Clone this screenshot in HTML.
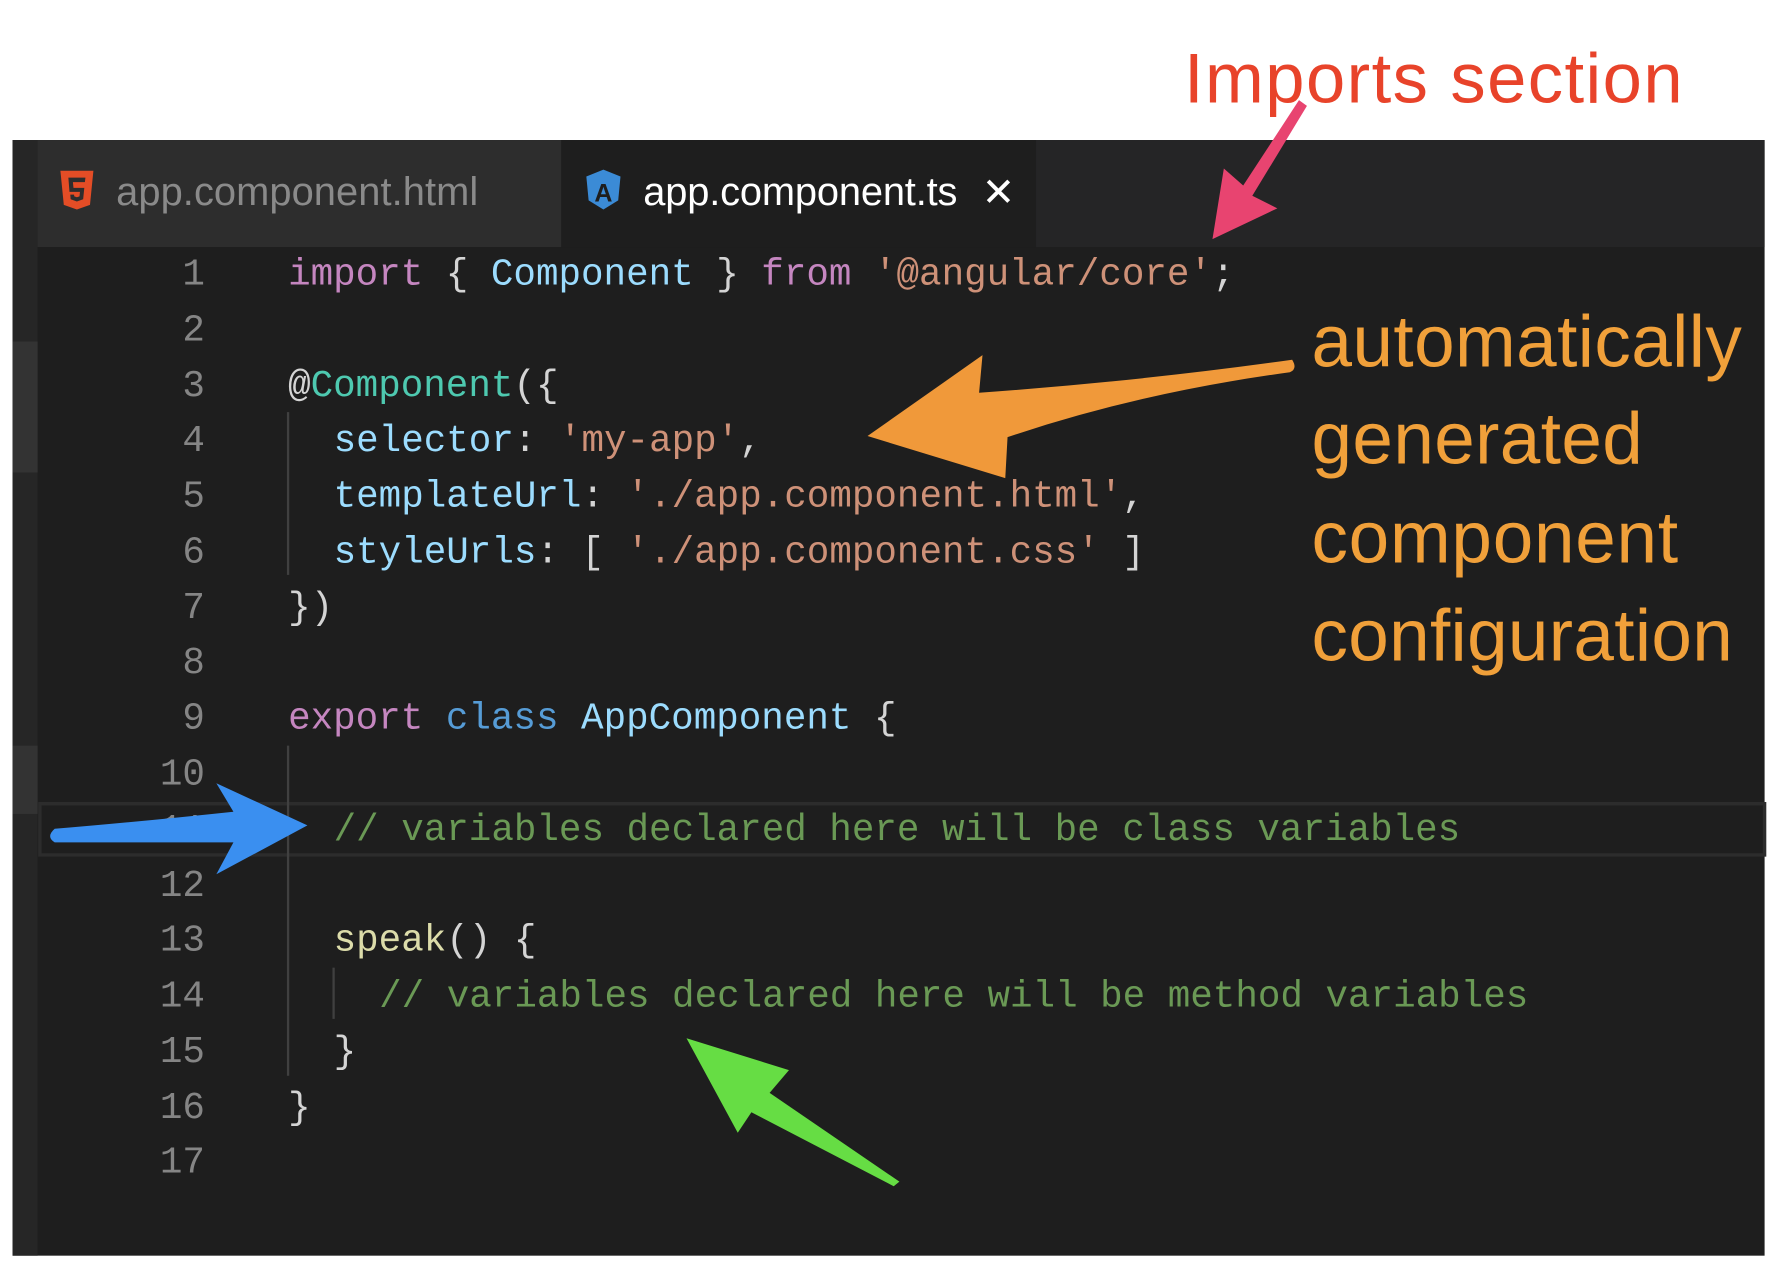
<!DOCTYPE html>
<html><head><meta charset="utf-8"><style>
html,body{margin:0;padding:0;background:#fff;width:1784px;height:1288px;overflow:hidden}
svg{display:block}
.m{font-family:"Liberation Mono",monospace;font-size:33px}
.s{font-family:"Liberation Sans",sans-serif}
</style></head><body>
<svg width="1784" height="1288" viewBox="0 0 1567 1131.4" xmlns="http://www.w3.org/2000/svg">
<rect x="0" y="0" width="1567" height="1132" fill="#fff"/>
<rect x="11" y="123" width="1539" height="980" fill="#1e1e1e"/>
<rect x="11" y="123" width="1539" height="94" fill="#252526"/>
<rect x="11" y="123" width="22" height="980" fill="#262626"/>
<rect x="11" y="300" width="22" height="115" fill="#333"/>
<rect x="11" y="655" width="22" height="60" fill="#333"/>
<rect x="33" y="123" width="460" height="94" fill="#2d2d2d"/>
<rect x="493" y="123" width="417" height="94" fill="#1e1e1e"/>
<rect x="35" y="706" width="1515" height="45" fill="#1e1e1e" stroke="#2c2c2c" stroke-width="3"/>
<path d="M53 150 L82 150 L79 180 L67.5 184 L56 180 Z" fill="#e44d26"/>
<path d="M60 156 L75 156 L74.5 160 L64 160 L64.5 165 L74 165 L73 175 L67.5 177 L62 175 L61.7 171 L65 171 L65.2 172.5 L67.5 173.3 L69.8 172.5 L70.2 168.5 L61 168.5 Z" fill="#2d2d2d"/>
<text x="102" y="180" class="s" font-size="35" fill="#8a8a8a" textLength="318">app.component.html</text>
<path d="M530 149 L545 155 L543 176 L530 184 L517 176 L515 155 Z" fill="#3b8bd6"/>
<text x="530" y="177" class="s" font-size="22" fill="#1e1e1e" text-anchor="middle" font-weight="bold">A</text>
<text x="565" y="180" class="s" font-size="35" fill="#fff" textLength="276">app.component.ts</text>
<path d="M868 159 L886 177 M886 159 L868 177" stroke="#fff" stroke-width="3.5"/>
<line x1="253" y1="362" x2="253" y2="505" stroke="#404040" stroke-width="2"/>
<line x1="253" y1="655" x2="253" y2="945" stroke="#404040" stroke-width="2"/>
<line x1="293" y1="850" x2="293" y2="895" stroke="#404040" stroke-width="2"/>
<g class="m" fill="#858585" text-anchor="end">
<text x="180" y="250">1</text><text x="180" y="299">2</text><text x="180" y="348">3</text>
<text x="180" y="396">4</text><text x="180" y="445">5</text><text x="180" y="494">6</text>
<text x="180" y="543">7</text><text x="180" y="591">8</text><text x="180" y="640">9</text>
<text x="180" y="689">10</text><text x="180" y="738">11</text><text x="180" y="787">12</text>
<text x="180" y="835">13</text><text x="180" y="884">14</text><text x="180" y="933">15</text>
<text x="180" y="982">16</text><text x="180" y="1030">17</text>
</g>
<g class="m" xml:space="preserve">
<text x="253" y="250"><tspan fill="#c586c0">import</tspan><tspan fill="#d4d4d4"> { </tspan><tspan fill="#9cdcfe">Component</tspan><tspan fill="#d4d4d4"> } </tspan><tspan fill="#c586c0">from</tspan><tspan fill="#d4d4d4"> </tspan><tspan fill="#ce9178">'@angular/core'</tspan><tspan fill="#d4d4d4">;</tspan></text>
<text x="253" y="348"><tspan fill="#d4d4d4">@</tspan><tspan fill="#4ec9b0">Component</tspan><tspan fill="#d4d4d4">({</tspan></text>
<text x="293" y="396"><tspan fill="#9cdcfe">selector</tspan><tspan fill="#d4d4d4">: </tspan><tspan fill="#ce9178">'my-app'</tspan><tspan fill="#d4d4d4">,</tspan></text>
<text x="293" y="445"><tspan fill="#9cdcfe">templateUrl</tspan><tspan fill="#d4d4d4">: </tspan><tspan fill="#ce9178">'./app.component.html'</tspan><tspan fill="#d4d4d4">,</tspan></text>
<text x="293" y="494"><tspan fill="#9cdcfe">styleUrls</tspan><tspan fill="#d4d4d4">: [ </tspan><tspan fill="#ce9178">'./app.component.css'</tspan><tspan fill="#d4d4d4"> ]</tspan></text>
<text x="253" y="543" fill="#d4d4d4">})</text>
<text x="253" y="640"><tspan fill="#c586c0">export</tspan><tspan fill="#d4d4d4"> </tspan><tspan fill="#569cd6">class</tspan><tspan fill="#d4d4d4"> </tspan><tspan fill="#9cdcfe">AppComponent</tspan><tspan fill="#d4d4d4">  {</tspan></text>
<text x="293" y="738" fill="#6a9955">// variables declared here will be class variables</text>
<text x="293" y="835"><tspan fill="#dcdcaa">speak</tspan><tspan fill="#d4d4d4">() {</tspan></text>
<text x="333" y="884" fill="#6a9955">// variables declared here will be method variables</text>
<text x="293" y="933" fill="#d4d4d4">}</text>
<text x="253" y="982" fill="#d4d4d4">}</text>
</g>
<text x="1040" y="90" class="s" font-size="62" fill="#e8432a" textLength="438">Imports section</text>
<g class="s" font-size="64" fill="#f0a03a">
<text x="1152" y="322" textLength="378">automatically</text>
<text x="1152" y="407" textLength="291">generated</text>
<text x="1152" y="494" textLength="322">component</text>
<text x="1152" y="580" textLength="370">configuration</text>
</g>
<path d="M1141 88 L1148 93 L1100 172 L1122 183 L1065 210 L1075 148 L1092 163 Z" fill="#e84470"/>
<path d="M1135 316 Q1140 324 1133 327 Q1000 345 885 384 L883 420 L762 383 L863 312 L860 345 Q1000 335 1135 316 Z" fill="#f0993a"/>
<path d="M270 725 L190 688 L205 713 Q120 722 48 728 Q40 735 48 740 Q120 740 205 740 L190 768 Z" fill="#3a8ff0"/>
<path d="M603 912 L693 940 L676 960 L790 1038 L785 1042 L660 977 L648 995 Z" fill="#66dd44"/>
</svg>
</body></html>
